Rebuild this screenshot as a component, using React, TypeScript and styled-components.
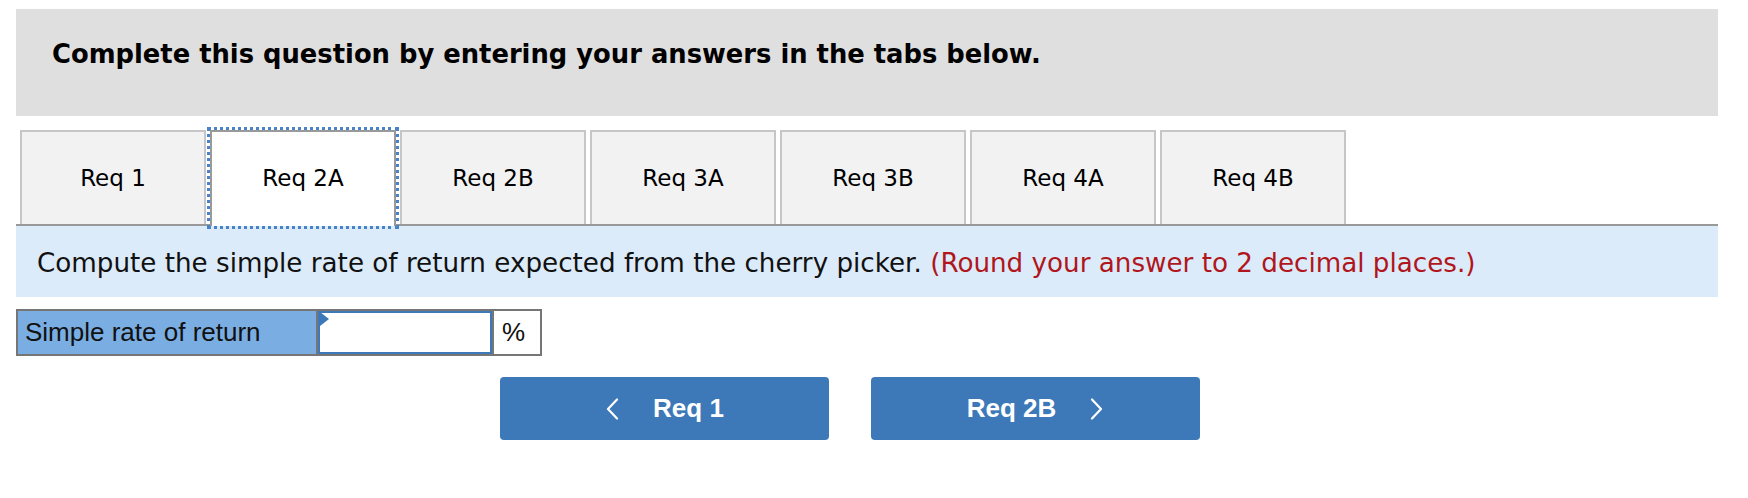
import React, { useState } from 'react'
import styled, { createGlobalStyle } from 'styled-components'

const GlobalStyle = createGlobalStyle`
  html, body {
    margin: 0;
    padding: 0;
    background: #ffffff;
  }
`

const Colors = {
  HEADER: '#dfdfdf',
  TAB_BG: '#f2f2f2',
  TAB_BORDER: '#c6c6c6',
  TAB_ACTIVE_BORDER: '#999999',
  FOCUS: '#4a82c8',
  PANEL: '#dcebf9',
  RED: '#b0161c',
  LABEL: '#7aade2',
  GRID: '#767676',
  BLUE: '#3d78b9',
}

const TABS = ['Req 1', 'Req 2A', 'Req 2B', 'Req 3A', 'Req 3B', 'Req 4A', 'Req 4B']

const Page = styled.div`
  width: 1702px;
  padding: 9px 0 0 16px;
`

const Header = styled.div`
  height: 107px;
  box-sizing: border-box;
  padding: 30px 0 0 36px;
  background: ${Colors.HEADER};
  font-family: 'DejaVu Sans', Verdana, sans-serif;
  font-weight: 700;
  font-size: 25.8px;
  line-height: 31px;
  color: #000;
`

const TabBar = styled.div`
  display: flex;
  gap: 4px;
  margin-top: 14px;
  padding-left: 4px;
  height: 94px;
  border-bottom: 2px solid ${Colors.TAB_ACTIVE_BORDER};
`

const Tab = styled.button<{ $active?: boolean }>`
  position: relative;
  box-sizing: border-box;
  width: 186px;
  height: ${(p) => (p.$active ? '96px' : '94px')};
  margin: 0 0 ${(p) => (p.$active ? '-2px' : '0')};
  padding: 0 0 ${(p) => (p.$active ? '2px' : '0')};
  display: flex;
  align-items: center;
  justify-content: center;
  border: 2px solid ${(p) => (p.$active ? Colors.TAB_ACTIVE_BORDER : Colors.TAB_BORDER)};
  border-bottom: none;
  background: ${(p) => (p.$active ? '#ffffff' : Colors.TAB_BG)};
  outline: ${(p) => (p.$active ? `3px dotted ${Colors.FOCUS}` : 'none')};
  z-index: ${(p) => (p.$active ? 1 : 0)};
  font-family: 'DejaVu Sans', Verdana, sans-serif;
  font-size: 23px;
  color: #000;
  cursor: pointer;
`

const Instructions = styled.div`
  height: 71px;
  box-sizing: border-box;
  display: flex;
  align-items: center;
  padding: 3px 0 0 21px;
  background: ${Colors.PANEL};
  font-family: 'DejaVu Sans', Verdana, sans-serif;
  font-size: 26.2px;
  color: #111;
  white-space: nowrap;
`

const Hint = styled.span`
  color: ${Colors.RED};
  margin-left: 0.32em;
`

const AnswerTable = styled.div`
  display: inline-flex;
  gap: 2px;
  margin-top: 12px;
  border: 2px solid ${Colors.GRID};
  background: ${Colors.GRID};
`

const LabelCell = styled.div`
  width: 298px;
  height: 43px;
  box-sizing: border-box;
  padding-left: 7px;
  display: flex;
  align-items: center;
  background: ${Colors.LABEL};
  font-family: 'Liberation Sans', Arial, sans-serif;
  font-size: 26px;
  color: #111;
`

const InputCell = styled.div`
  position: relative;
  width: 174px;
  height: 43px;
  background: #fff;
`

const AnswerInput = styled.input`
  width: 100%;
  height: 100%;
  box-sizing: border-box;
  margin: 0;
  border: 2px solid ${Colors.BLUE};
  outline: none;
  padding: 0 8px;
  font-family: 'Liberation Sans', Arial, sans-serif;
  font-size: 24px;
  text-align: right;
`

const CornerMark = styled.span`
  position: absolute;
  left: 2px;
  top: 1px;
  width: 0;
  height: 0;
  border-left: 9px solid ${Colors.BLUE};
  border-top: 7px solid transparent;
  border-bottom: 7px solid transparent;
`

const UnitCell = styled.div`
  width: 46px;
  height: 43px;
  box-sizing: border-box;
  padding-left: 8px;
  display: flex;
  align-items: center;
  background: #fff;
  font-family: 'Liberation Sans', Arial, sans-serif;
  font-size: 26px;
  color: #111;
`

const NavRow = styled.div`
  display: flex;
  gap: 42px;
  margin-top: 21px;
  padding-left: 484px;
`

const NavButton = styled.button`
  width: 329px;
  height: 63px;
  display: flex;
  align-items: center;
  justify-content: center;
  gap: 34px;
  border: none;
  border-radius: 4px;
  background: ${Colors.BLUE};
  color: #fff;
  font-family: 'Liberation Sans', Arial, sans-serif;
  font-weight: 700;
  font-size: 26px;
  cursor: pointer;
`

const Chevron: React.FC<{ dir: 'left' | 'right' }> = ({ dir }) => (
  <svg width="14" height="22" viewBox="0 0 14 22" fill="none">
    <polyline
      points={dir === 'left' ? '12,1.5 3,11 12,20.5' : '2,1.5 11,11 2,20.5'}
      stroke="#fff"
      strokeWidth="2.2"
      strokeLinecap="round"
      strokeLinejoin="round"
    />
  </svg>
)

export default function App() {
  const [active, setActive] = useState(1)
  const [value, setValue] = useState('')

  return (
    <Page>
      <GlobalStyle />
      <Header>Complete this question by entering your answers in the tabs below.</Header>

      <TabBar>
        {TABS.map((t, i) => (
          <Tab key={t} $active={i === active} onClick={() => setActive(i)}>
            {t}
          </Tab>
        ))}
      </TabBar>

      <Instructions>
        Compute the simple rate of return expected from the cherry picker.
        <Hint>(Round your answer to 2 decimal places.)</Hint>
      </Instructions>

      <AnswerTable>
        <LabelCell>Simple rate of return</LabelCell>
        <InputCell>
          <AnswerInput value={value} onChange={(e) => setValue(e.target.value)} />
          <CornerMark />
        </InputCell>
        <UnitCell>%</UnitCell>
      </AnswerTable>

      <NavRow>
        <NavButton onClick={() => setActive(0)}>
          <Chevron dir="left" />
          <span>Req 1</span>
        </NavButton>
        <NavButton onClick={() => setActive(2)}>
          <span>Req 2B</span>
          <Chevron dir="right" />
        </NavButton>
      </NavRow>
    </Page>
  )
}
